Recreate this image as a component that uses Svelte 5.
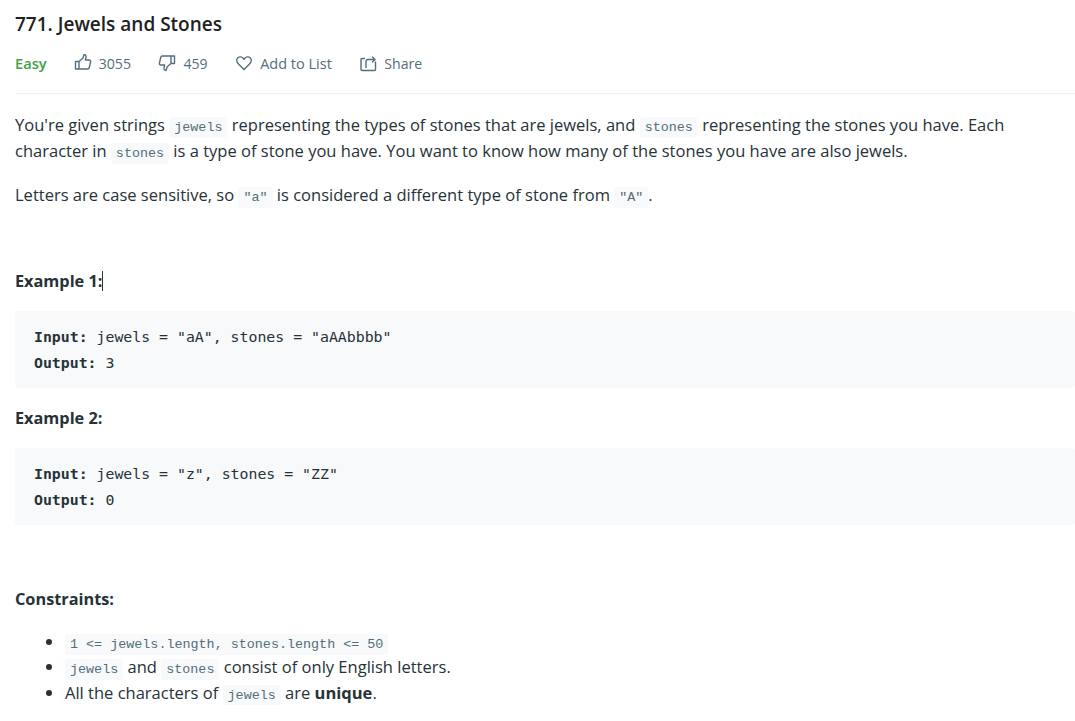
<script lang="ts">
	// LeetCode-style problem description
	const actions = [
		{ icon: 'up', label: '3055' },
		{ icon: 'down', label: '459' },
		{ icon: 'heart', label: 'Add to List' },
		{ icon: 'share', label: 'Share' }
	];
	const examples = [
		{ title: 'Example 1:', caret: true, input: 'jewels = "aA", stones = "aAAbbbb"', output: '3' },
		{ title: 'Example 2:', caret: false, input: 'jewels = "z", stones = "ZZ"', output: '0' }
	];
</script>

<main class="page">
	<header class="head">
		<h1>771. Jewels and Stones</h1>
		<div class="meta">
			<span class="easy">Easy</span>
			{#each actions as a}
				<span class="action" class:list={a.icon === 'heart'}>
					<svg viewBox="0 0 18 18" width="18" height="18" fill="none" stroke="currentColor" stroke-width="1.4" stroke-linejoin="round" stroke-linecap="round">
						{#if a.icon === 'up'}
							<path transform="translate(0 -1)" d="M1.500 8.500h3.500v7.500h-3.500z M5 8.500l3.800-3.200 1.200-3.800c1.500 0 2.300 1.200 2 2.700l-.6 2.800h3.800c1 0 1.600 .8 1.400 1.700l-1.300 5.800c-.2 .9-.8 1.500-1.700 1.500h-8.600" />
						{:else if a.icon === 'down'}
							<path d="M16.500 2h-3.500v7.500h3.500z M13 9.500l-3.800 3.200-1.200 3.800c-1.500 0-2.300-1.200-2-2.700l.6-2.800h-3.800c-1 0-1.600-.8-1.400-1.700l1.300-5.800c.2-.9 .8-1.500 1.700-1.500h8.600" />
						{:else if a.icon === 'heart'}
							<path d="M9 15.500l-6-6c-1.700-1.700-1.700-4.200-.1-5.700 1.600-1.400 3.900-1.100 5.200 .4l.9 1 .9-1c1.300-1.500 3.600-1.800 5.200-.4 1.600 1.500 1.600 4-.1 5.700z" />
						{:else}
							<path d="M5.500 4.500h-2.500c-.6 0-1 .4-1 1v10c0 .6 .4 1 1 1h12.500c.6 0 1-.4 1-1v-7.500 M7 13.500v-6c0-1.200 .8-2 2-2h6.500 M13.500 3l2.500 2.500-2.500 2.500" />
						{/if}
					</svg>
					{a.label}
				</span>
			{/each}
		</div>
	</header>

	<section class="body">
		<p>You're given strings <code>jewels</code> representing the types of stones that are jewels, and <code>stones</code> representing the stones you have. Each character in <code>stones</code> is a type of stone you have. You want to know how many of the stones you have are also jewels.</p>
		<p>Letters are case sensitive, so <code>"a"</code> is considered a different type of stone from <code>"A"</code>.</p>
		<div class="spacer"></div>

		{#each examples as ex}
			<h4>{ex.title}{#if ex.caret}<span class="caret"></span>{/if}</h4>
			<pre><strong>Input:</strong> {ex.input}
<strong>Output:</strong> {ex.output}</pre>
		{/each}
		<div class="spacer wide"></div>

		<h4>Constraints:</h4>
		<ul>
			<li><code>1 &lt;= jewels.length, stones.length &lt;= 50</code></li>
			<li><code>jewels</code> and <code>stones</code> consist of only English letters.</li>
			<li>All the characters of <code>jewels</code> are <strong>unique</strong>.</li>
		</ul>
	</section>
</main>

<style>
	:global(body) {
		margin: 0;
		background: #fff;
		overflow: hidden;
	}
	.page {
		padding-left: 15px;
		font-family: "Open Sans", "Noto Sans", sans-serif;
		color: #263238;
	}
	.head {
		border-bottom: 1px solid #eceff1;
		height: 93px;
	}
	h1 {
		margin: 0;
		padding-top: 11px;
		font-size: 19px;
		line-height: 26px;
		font-weight: 600;
		color: #212121;
	}
	.meta {
		display: flex;
		align-items: center;
		height: 26px;
		margin-top: 13px;
		font-size: 14.1px;
		color: #546e7a;
	}
	.easy {
		color: #43a047;
		font-size: 14.7px;
		font-weight: 600;
		margin-right: 27px;
	}
	.action {
		display: flex;
		align-items: center;
		gap: 7px;
		margin-right: 27.500px;
	}
	.action.list {
		font-size: 14.5px;
	}
	.body {
		font-size: 16.52px;
		line-height: 25.6px;
		padding-top: 18px;
	}
	p {
		margin: 0 0 19px;
	}
	code {
		font-family: "Liberation Mono", monospace;
		font-size: 13.4px;
		line-height: 1;
		color: #546e7a;
		background: #f7f9fa;
		padding: 3px 5px;
		border-radius: 3px;
	}
	.spacer {
		height: 42.100px;
	}
	.spacer.wide {
		height: 43.300px;
	}
	h4 {
		margin: 0;
		font-size: 16.3px;
		line-height: 25.6px;
		font-weight: 700;
	}
	.caret {
		display: inline-block;
		width: 1px;
		height: 20px;
		background: #263238;
		vertical-align: -4px;
	}
	pre {
		margin: 16.400px 0 18.400px;
		padding: 13px 19px 12px;
		background: #f7f9fa;
		border-radius: 3px;
		font-family: "DejaVu Sans Mono", monospace;
		font-size: 14.85px;
		line-height: 26px;
		color: #263238;
	}
	ul {
		margin: 16px 0 0;
		padding-left: 50px;
	}
</style>
